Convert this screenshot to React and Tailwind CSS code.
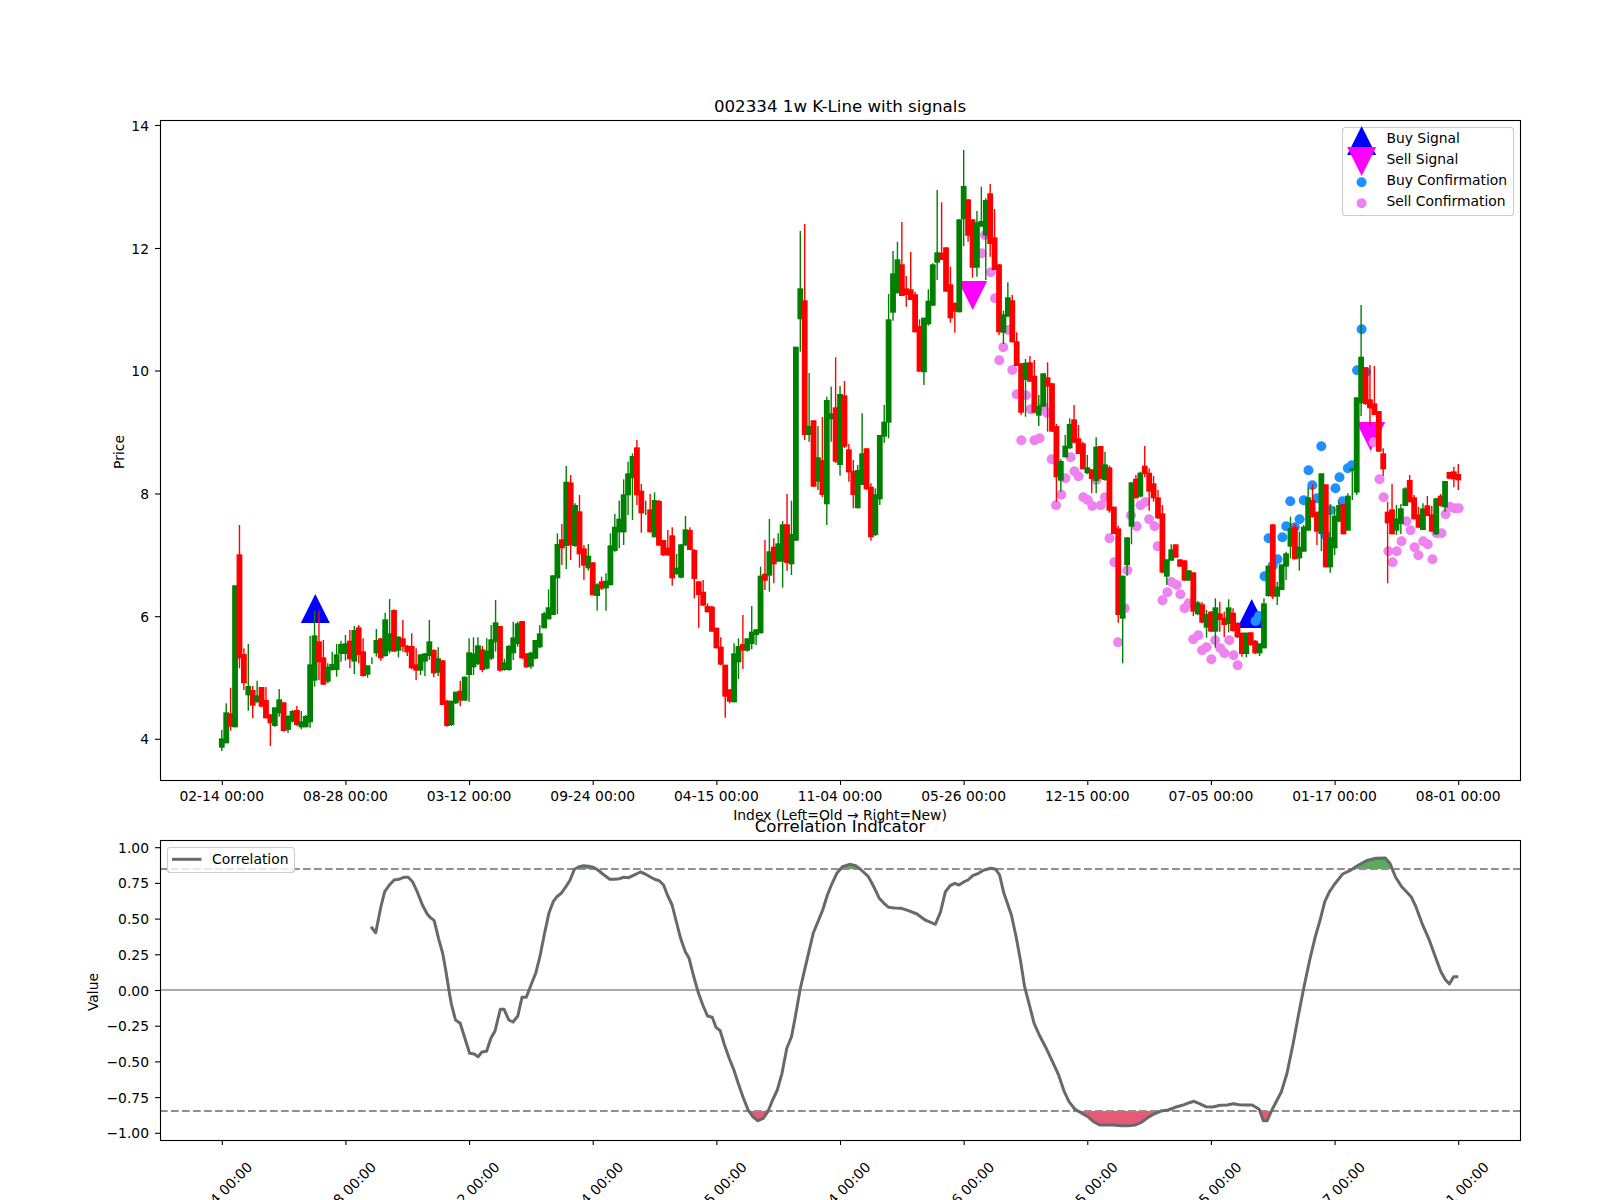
import React from 'react';

const GREEN = '#008000';
const RED = '#ff0000';

// candle rows: [red?, bodyTop, bodyBottom, high, low], traced in crop pixels
const seg = (rows, y0, k = 3) => rows.map(([c, a, b, h, l]) => [c, y0 + a / k, y0 + b / k, y0 + h / k, y0 + l / k]);

const candles = [
  ...seg([
    [0,955,983,930,993],[0,877,970,850,970],[1,880,920,803,932],[0,496,922,496,922],[1,403,715,315,745],
    [1,702,790,685,810],[0,798,826,672,872],[1,810,857,798,895],[0,826,846,782,850],[1,801,860,801,862],
    [1,840,895,801,895],[1,883,910,883,978],[0,862,918,862,920],[0,838,880,807,890],[1,847,933,847,935],
    [0,888,930,885,938],[0,873,905,870,908],[1,870,915,858,918],[0,904,922,873,928],[0,888,922,885,922],
    [0,733,907,648,923],[0,646,782,572,800],[1,664,727,572,780],[1,712,794,660,795],[0,740,785,730,790],
    [0,732,750,695,752],[0,703,750,672,770],[0,672,702,662,725],[0,670,702,645,722],[1,662,718,630,745],
    [0,630,725,618,762],[1,622,705,615,730],[1,694,768,655,770],[0,736,764,736,773],[0,720,720,712,732],
    [0,660,700,627,710],[1,655,715,655,722],[0,598,708,578,710],[0,640,693,537,700],[1,570,695,568,695],
    [0,650,692,648,712],[1,655,680,600,695],[1,677,697,675,708],[1,678,745,640,748],[1,733,752,685,780],
    [0,703,752,703,765],[0,700,725,700,768],[0,664,708,600,720],[1,690,760,688,772],[0,715,758,682,768],
    [1,721,855,720,855],[1,842,918,840,920],[0,842,915,842,918],[0,815,850,815,852],[1,812,842,782,858],
    [0,770,842,770,842],[0,697,765,655,845],[0,700,742,652,765],[0,676,732,652,735],[1,688,750,678,757],
    [0,692,746,655,748],[0,658,716,615,720],[0,607,667,540,695],[1,618,752,618,755],[0,727,750,716,752],
    [0,678,750,675,752],[0,652,700,605,720],[0,610,672,605,680],[1,603,715,603,716],[1,700,742,700,744],
    [0,698,740,695,746],[0,660,716,660,718],[0,640,682,615,685],[0,580,625,575,622],[0,562,598,508,598],
    [0,466,585,466,585],[0,372,475,340,582],[1,358,385,312,435],[0,185,378,138,447],[1,187,376,165,420],
    [0,255,378,250,380],[1,274,403,225,443],[1,385,437,375,480],[0,407,445,372,452],[1,427,526,427,526],
    [0,493,528,490,572],
  ], 420),
  ...seg([
    [1,424,446,410,450],[0,422,445,400,512],[0,316,435,280,437],[0,260,333,222,335],[0,236,277,182,325],
    [0,163,277,118,315],[0,100,166,65,225],[0,48,115,40,240],[1,22,166,0,195],[1,152,220,132,278],
    [0,200,200,182,225],[1,208,277,162,277],[0,180,292,157,292],[1,183,317,180,317],[1,300,346,300,348],
    [1,323,346,270,348],[1,286,415,262,437],[0,383,402,342,405],[0,313,413,313,415],[0,268,316,228,318],
    [1,270,330,262,330],[1,330,417,327,475],[1,424,465,424,563],[1,455,497,420,497],[1,498,517,490,517],
    [1,500,575,497,575],[1,563,625,563,625],[1,620,674,592,676],[1,674,770,674,833],[1,748,785,748,790],
    [0,640,787,610,787],[0,618,667,595,717],[1,612,632,525,687],[0,595,632,595,635],[0,575,612,498,628],
    [0,568,585,568,615],[0,407,580,380,580],[1,401,422,300,450],[0,334,407,237,455],[1,320,373,295,430],
    [0,310,365,280,365],[0,253,365,243,443],[1,253,369,162,392],[0,282,373,182,405],
  ], 440),
  ...seg([
    [0,346.7,540.7,346.7,540.7],[0,288.3,319.3,231,351.7],[1,300.3,435,224,440],[0,426,435,373,441.7],
    [1,420.3,486.7,420.3,486.7],[0,457.3,481.7,426,490],[1,460,495,417,497],[0,400,504.3,396.7,525],
    [0,413.3,419.3,386.7,441.7],[1,407.3,461.7,357.3,463],[0,394,465,386,475.7],[1,395.3,446.7,381,448],
    [1,449.3,472.3,444,481.7],[1,471,495,460,508.3],[0,470,508.3,465,508.3],[0,453.3,485,413.3,485],
    [1,448.3,489.3,448,490],[1,486.7,537.3,483.3,540.7],[0,494.3,535,488.3,536],[0,435,499.3,435,505],
    [0,421.7,436.7,405,442.7],[0,319.3,422.7,294,438.3],[0,273.3,312.7,251,320.7],[0,259.3,293.3,241.7,293.3],
    [1,264.3,296,222,296],[1,288.3,295,276,306.7],[1,289.3,300,252,300],[1,294.3,332.3,291.7,332.3],
    [1,326,371.7,319.3,371.7],[0,317.7,372.3,317.7,385],[0,300.7,324.3,289.3,325.7],[0,264.3,305.7,263.3,305.7],
    [0,252.3,262.7,190,280],[1,252.7,260,202.3,260],[1,247.3,291.7,247.3,291.7],[1,284.3,318.3,266.7,322.7],
    [1,302.7,311.7,302.7,332.7],[0,219.3,312.3,219.3,312.3],[0,186,219.3,150,246],[1,199.3,235.7,199.3,241.7],
    [1,219.3,267.7,219.3,277.7],[0,222.3,267.7,211,276.7],[0,221,226.7,186.7,226.7],[0,200,235.7,198.3,280],
    [1,193.3,244,184,256.7],[1,237.3,270,209,270],[1,264.3,332.3,264.3,335],[0,314.3,332.7,310.7,344],
    [0,297.3,316.7,282.3,316.7],[1,300.3,342.3,295,342.3],[1,341.3,366,332.3,366],[1,363.3,412.7,363.3,415],
    [0,362.7,380,359,416.7],[1,362.3,381.7,356,381.7],[1,375.7,412.7,360,413.3],[0,405.7,415.7,395,426],
    [0,373.3,406.7,373.3,406.7],[1,377.3,386.7,362.3,431.7],[1,383.3,431.7,383,432],
  ], 0, 1),
  ...seg([
    [1,78,232,72,305],[0,183,242,178,275],[0,137,172,105,172],[0,72,145,55,147],[1,58,128,15,130],
    [1,115,162,75,162],[1,130,208,125,208],[0,202,220,165,222],[1,208,237,208,280],[0,140,243,112,280],
    [1,138,237,138,237],[0,193,240,155,242],[1,202,332,197,338],[1,320,402,320,402],[1,385,645,378,668],
    [0,527,656,527,790],[0,412,495,412,527],[0,247,380,247,433],[1,236,295,225,295],[0,218,290,215,292],
    [1,197,222,138,232],[1,218,275,205,332],[1,250,295,228,305],[1,292,355,270,357],[1,340,518,315,520],
    [0,478,530,478,555],[0,448,482,433,482],[1,433,473,433,473],[1,478,500,478,500],[1,481,542,481,542],
    [0,511,542,511,542],[1,517,635,517,648],[0,607,643,603,645],[1,613,668,607,670],[0,642,683,630,713],
    [1,635,695,633,695],[0,622,695,595,743],[1,640,660,605,695],[1,653,675,635,712],[0,622,672,598,697],
    [1,638,693,625,695],[1,668,712,668,714],[1,698,762,698,770],[0,698,762,698,772],[1,697,735,697,737],
    [1,722,760,720,762],[0,730,760,730,768],[0,610,745,595,745],[0,497,588,497,590],[1,373,590,373,597],
    [0,560,590,545,615],[0,493,570,493,570],[0,460,500,455,540],[0,385,440,350,475],[1,380,478,372,478],
    [0,440,475,395,512],[0,380,455,375,455],[0,292,392,262,392],[1,300,352,252,352],[1,335,395,335,435],
    [0,220,402,220,453],[1,253,502,253,502],[0,412,502,312,518],[0,347,445,320,465],[0,315,365,305,367],
    [1,312,403,312,403],[0,287,392,280,392],[0,205,212,205,300],[0,-8,278,-8,285],[0,-130,10,-285,48],
    [1,-98,12,-98,15],[1,-2,25,-105,75],[1,10,45,-102,45],[1,33,155,33,155],[1,160,208,145,228],
    [1,335,370,305,550],[1,328,403,252,403],[0,355,392,315,405],[0,325,372,312,402],[0,265,318,262,318],
    [1,240,307,225,307],[1,292,358,285,358],[1,343,383,320,385],[0,325,390,310,390],[1,316,348,288,348],
    [1,343,395,318,395],[0,295,403,293,405],[1,287,318,282,320],[0,243,322,243,335],[1,216,236,216,238],
    [1,214,238,200,262],[1,222,241,192,270],
  ], 400),
];

const candleX = (i) => 221.8 + 4.416 * i;

const sellDots = [
  [981.7,253.3],[985,235],[990.7,272.3],[995,298.3],[1008,330],[1003.3,347.3],[999.3,360.3],[1012.3,370],
  [1016.7,394.3],[1026,395.3],[1030.7,409.3],[1047,413],[1043.3,406.7],[1021.3,440.3],[1034.4,440.3],[1039.6,438.3],
  [1051.7,459.3],[1070.6,457.3],[1065.4,478.3],[1061.3,494.7],[1056.1,505.3],[1074.4,471.3],[1078.5,476.3],
  [1083.3,497.3],[1087.8,500],[1092.3,506],[1100.9,505.3],[1105,497.3],[1096.4,480],[1109.5,538.3],[1114.3,562.3],
  [1127.4,570.3],[1124.7,608.3],[1118,642.3],[1130.9,515.3],[1136.7,526.3],[1140.5,505.3],[1145.3,502],
  [1149.1,519.3],[1154.6,526.3],[1157.7,546.3],[1162.5,600.3],[1167.4,592.3],[1171.5,582],[1176.7,585],
  [1180.4,594.3],[1184.6,608.3],[1188.7,603.3],[1193.2,639.3],[1198.3,635.3],[1202.1,650.3],[1206.6,647.3],
  [1211.4,659.3],[1215.2,640.3],[1220.4,648.3],[1224.5,653.3],[1229.3,640.3],[1233.5,655.3],[1237.6,665.3],
  [1373.6,442.3],[1379.5,479.3],[1383.6,497.3],[1388.4,551.3],[1392.6,562.3],[1396.7,551.3],[1401.5,541.3],
  [1406.3,521.3],[1410.5,530.3],[1414.6,547.3],[1418.4,555.3],[1423.2,541.3],[1427.7,544.3],[1432.5,559.3],
  [1436.6,533.3],[1441.5,533.3],[1445.6,514.3],[1449.7,506.7],[1454.5,508.3],[1458.7,508.3],
];

const buyDots = [
  [1321.3,446.3],[1308.5,470.3],[1312.3,485.3],[1290.3,501.3],[1303.7,500.3],[1316.8,498.3],[1339.5,477.3],
  [1335.4,488.3],[1347.8,468.3],[1351.9,465.3],[1342.6,501.3],[1330.6,510.3],[1299.6,519.3],[1286.2,526.3],
  [1294.8,527.3],[1282.4,537.3],[1268.6,538.3],[1325.4,535],[1277.5,559.3],[1272.7,565.7],[1264.5,576.3],
  [1255.5,621],[1259,616],[1361.6,329.3],[1357.1,370.3],[1366,372],
];

const corrLeft = [
  [659,410],[669,428],[680,350],[688,305],[698,285],[708,270],[718,268],[728,262],[738,262],[747,275],[757,305],
  [768,345],[778,372],[785,383],[793,392],[802,445],[811,490],[818,545],[824,600],[829,640],[838,690],[848,700],
  [857,740],[868,790],[878,792],[886,800],[894,786],[904,784],[913,745],[922,722],[933,658],[941,658],[951,690],
  [960,696],[970,678],[979,622],[988,622],[998,585],[1008,550],[1017,500],[1026,435],[1036,370],[1045,335],
  [1053,320],[1062,310],[1072,290],[1081,270],[1090,238],[1100,230],[1110,227],[1120,229],[1130,232],[1140,240],
  [1150,252],[1165,268],[1175,268],[1185,266],[1195,262],[1205,263],[1215,256],[1230,246],[1240,252],[1250,260],
  [1260,268],[1270,272],[1279,285],[1287,315],[1297,345],[1305,390],[1315,445],[1325,485],[1333,505],[1342,555],
  [1353,610],[1362,645],[1372,678],[1382,682],[1390,712],[1399,722],[1408,765],[1418,805],[1428,840],[1437,880],
  [1447,920],[1458,960],[1468,980],[1479,992],[1490,985],[1500,965],[1510,930],[1520,900],[1530,850],[1540,775],
  [1550,740],[1558,680],
].map(([x, y]) => [60 + x / 2.119, 790 + y / 3]);

const corrRight = [
  [0,600],[8,550],[18,490],[28,430],[38,395],[48,360],[58,315],[68,280],[78,250],[90,230],[105,223],[118,227],
  [130,240],[145,260],[157,292],[168,325],[178,340],[188,352],[200,354],[215,355],[230,362],[248,372],[265,390],
  [277,397],[287,403],[298,365],[308,305],[318,287],[328,280],[337,285],[348,275],[356,270],[366,257],[378,250],
  [390,240],[405,235],[415,238],[423,255],[432,310],[448,375],[458,440],[467,510],[476,590],[487,650],[496,700],
  [507,735],[520,770],[535,815],[548,855],[560,905],[570,935],[582,957],[595,968],[610,980],[622,995],[635,1005],
  [650,1005],[665,1005],[680,1007],[695,1007],[710,1005],[722,998],[735,985],[750,972],[765,963],[780,960],
  [795,952],[810,946],[825,938],[835,934],[845,940],[860,950],[875,951],[890,946],[905,945],[918,941],[930,944],
  [945,945],[958,945],[973,958],[982,992],[990,992],[1000,960],[1020,905],[1032,850],[1045,760],[1057,670],
  [1068,590],[1080,510],[1092,440],[1102,390],[1112,335],[1122,305],[1133,282],[1150,252],[1165,242],[1180,228],
  [1200,212],[1220,205],[1240,204],[1250,220],[1262,262],[1275,290],[1295,320],[1305,350],[1318,400],[1332,445],
  [1345,495],[1358,545],[1368,570],[1376,582],[1385,560],[1395,560],
].map(([x, y]) => [800 + x / 2.119, 790 + y / 3]);

const corr = [...corrLeft, ...corrRight];
const corrPts = corr.map(([x, y]) => `${x.toFixed(1)},${y.toFixed(1)}`).join(' ');
const corrStart = corr[0][0].toFixed(1);
const corrEnd = corr[corr.length - 1][0].toFixed(1);

const dateLabels = ['02-14', '08-28', '03-12', '09-24', '04-15', '11-04', '05-26', '12-15', '07-05', '01-17', '08-01'];
const tickX = dateLabels.map((_, i) => 222.3 + 123.64 * i);
const priceTicks = [[14, 125.5], [12, 248.5], [10, 371], [8, 494], [6, 616.7], [4, 739.3]];
const valueTicks = ['1.00', '0.75', '0.50', '0.25', '0.00', '−0.25', '−0.50', '−0.75', '−1.00'];

const triUp = (cx, apex) => `${cx},${apex} ${cx - 14.5},${apex + 29} ${cx + 14.5},${apex + 29}`;
const triDown = (cx, base) => `${cx - 14.5},${base} ${cx + 14.5},${base} ${cx},${base + 29}`;

const Candle = ({ row, i }) => {
  const [isRed, top, bottom, high, low] = row;
  const color = isRed ? RED : GREEN;
  const x = candleX(i);
  return (
    <g>
      <line x1={x} x2={x} y1={high} y2={low} stroke={color} strokeWidth="1.4" />
      {bottom > top && <rect x={x - 2.9} y={top} width="5.8" height={bottom - top} fill={color} />}
    </g>
  );
};

const PriceChart = () => (
  <svg className="block overflow-visible" width="1600" height="820" viewBox="0 0 1600 820">
    <text x="840" y="112" textAnchor="middle" className="text-[16.67px]">002334 1w K-Line with signals</text>

    <polygon points={triUp(315.3, 594)} fill="#0000ff" />
    <polygon points={triDown(972.7, 281)} fill="#ff00ff" />
    <polygon points={triUp(1251.7, 599)} fill="#0000ff" />
    <polygon points={triDown(1370.7, 422)} fill="#ff00ff" />

    {buyDots.map(([x, y], i) => <circle key={i} cx={x} cy={y} r="5" fill="#1e90ff" />)}
    {sellDots.map(([x, y], i) => <circle key={i} cx={x} cy={y} r="5" fill="#ee82ee" />)}
    {candles.map((row, i) => <Candle key={i} row={row} i={i} />)}

    <rect x="160.5" y="120.5" width="1360" height="660" fill="none" stroke="#000" strokeWidth="1.1" />

    {priceTicks.map(([label, y]) => (
      <g key={label}>
        <line x1="155" x2="160" y1={y} y2={y} stroke="#000" strokeWidth="1.1" />
        <text x="149" y={y + 5} textAnchor="end" className="text-[13.89px]">{label}</text>
      </g>
    ))}
    {dateLabels.map((label, i) => (
      <g key={label}>
        <line x1={tickX[i]} x2={tickX[i]} y1="780" y2="785" stroke="#000" strokeWidth="1.1" />
        <text x={tickX[i] - 0.5} y="801" textAnchor="middle" className="text-[13.89px]">{label} 00:00</text>
      </g>
    ))}
    <text transform="translate(124,452) rotate(-90)" textAnchor="middle" className="text-[13.89px]">Price</text>
    <text x="840" y="820" textAnchor="middle" className="text-[13.89px]">Index (Left=Old → Right=New)</text>

    <rect x="1342.5" y="127.5" width="171" height="88" rx="3" fill="#fff" fillOpacity="0.8" stroke="#ccc" strokeWidth="1.1" />
    <polygon points={triUp(1361.6, 126)} fill="#0000ff" />
    <polygon points={triDown(1361.6, 147)} fill="#ff00ff" />
    <circle cx="1361.6" cy="182.3" r="5" fill="#1e90ff" />
    <circle cx="1361.6" cy="203.3" r="5" fill="#ee82ee" />
    <text x="1386.4" y="143" className="text-[13.89px]">Buy Signal</text>
    <text x="1386.4" y="164" className="text-[13.89px]">Sell Signal</text>
    <text x="1386.4" y="185" className="text-[13.89px]">Buy Confirmation</text>
    <text x="1386.4" y="206" className="text-[13.89px]">Sell Confirmation</text>
  </svg>
);

const CorrelationChart = () => (
  <svg className="block overflow-visible" width="1600" height="380" viewBox="0 820 1600 380">
    <text x="840" y="832" textAnchor="middle" className="text-[16.67px]">Correlation Indicator</text>

    <defs>
      <clipPath id="above-band"><rect x="160" y="840" width="1360" height="29" /></clipPath>
      <clipPath id="below-band"><rect x="160" y="1111" width="1360" height="29" /></clipPath>
    </defs>
    <polygon points={`${corrPts} ${corrEnd},869 ${corrStart},869`} fill="#008000" fillOpacity="0.65" clipPath="url(#above-band)" />
    <polygon points={`${corrPts} ${corrEnd},1111 ${corrStart},1111`} fill="#dc143c" fillOpacity="0.7" clipPath="url(#below-band)" />

    <line x1="160" x2="1520" y1="990" y2="990" stroke="#aaaaaa" strokeWidth="2.2" />
    <line x1="160" x2="1520" y1="869" y2="869" stroke="#8f8f8f" strokeWidth="2.2" strokeDasharray="7.7 3.3" />
    <line x1="160" x2="1520" y1="1111" y2="1111" stroke="#8f8f8f" strokeWidth="2.2" strokeDasharray="7.7 3.3" />
    <polyline points={corrPts} fill="none" stroke="#696969" strokeWidth="3" strokeLinejoin="round" />

    <rect x="160.5" y="840.5" width="1360" height="300" fill="none" stroke="#000" strokeWidth="1.1" />

    {valueTicks.map((label, i) => {
      const y = 847.7 + 35.7 * i;
      return (
        <g key={label}>
          <line x1="155" x2="160" y1={y} y2={y} stroke="#000" strokeWidth="1.1" />
          <text x="149" y={y + 5} textAnchor="end" className="text-[13.89px]">{label}</text>
        </g>
      );
    })}
    {dateLabels.map((label, i) => (
      <g key={label}>
        <line x1={tickX[i]} x2={tickX[i]} y1="1140" y2="1145" stroke="#000" strokeWidth="1.1" />
        <text transform={`translate(${tickX[i] - 2.5},1194.5) rotate(-45)`} y="5" textAnchor="middle" className="text-[13.89px]">{label} 00:00</text>
      </g>
    ))}
    <text transform="translate(98,992) rotate(-90)" textAnchor="middle" className="text-[13.89px]">Value</text>

    <rect x="167.5" y="847.5" width="127" height="25" rx="3" fill="#fff" fillOpacity="0.8" stroke="#ccc" strokeWidth="1.1" />
    <line x1="172" x2="201.5" y1="859.3" y2="859.3" stroke="#696969" strokeWidth="3" />
    <text x="212" y="864" className="text-[13.89px]">Correlation</text>
  </svg>
);

export default function App() {
  return (
    <div className="w-[1600px] h-[1200px] overflow-hidden bg-white font-['DejaVu_Sans',sans-serif]">
      <PriceChart />
      <CorrelationChart />
    </div>
  );
}
